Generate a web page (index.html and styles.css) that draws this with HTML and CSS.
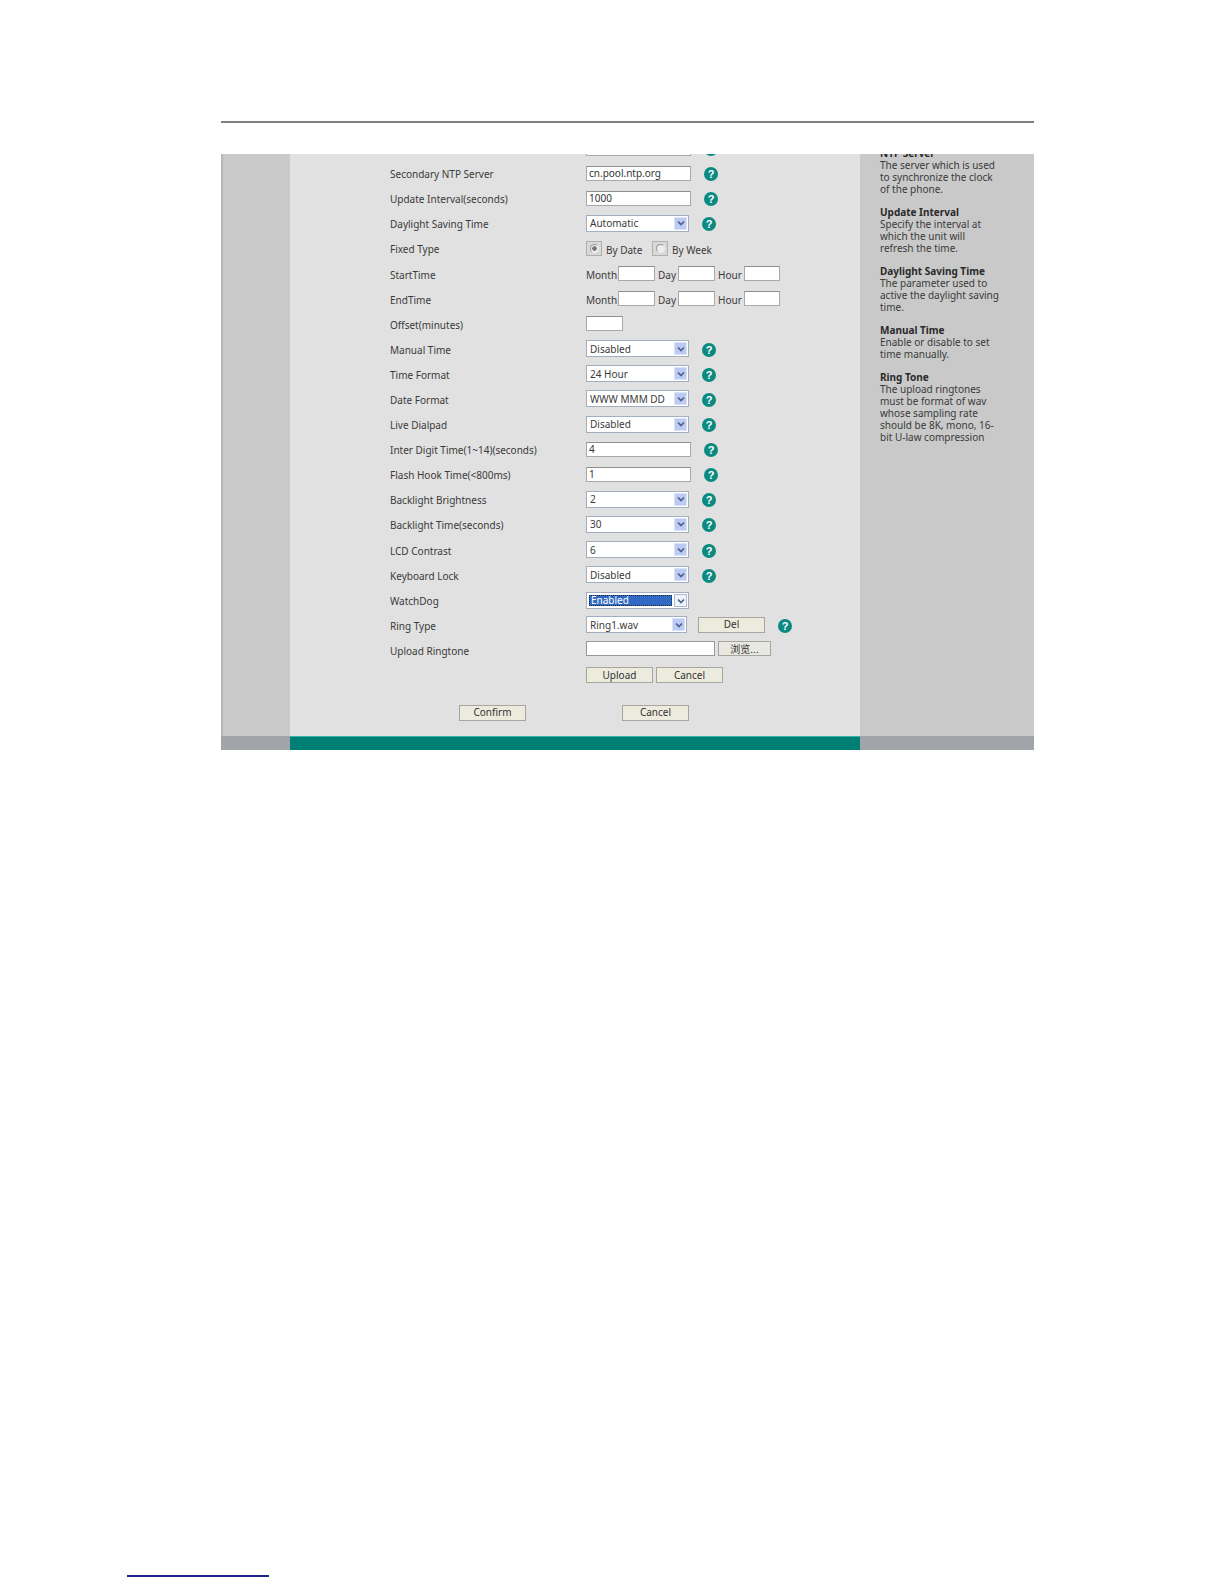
FILE: index.html
```html
<!DOCTYPE html>
<html lang="en">
<head>
<meta charset="utf-8">
<title>Phone preferences</title>
<link rel="stylesheet" href="styles.css">
</head>
<body>
<div class="rule"></div>
<div class="shot">
  <div class="shot-main">
    <div class="side-left"></div>
    <div class="center">
      <div class="form">
        <div class="row"><span class="label"></span><input class="txt" value=""><span class="help"></span></div>
        <div class="row"><span class="label">Secondary NTP Server</span><input class="txt" value="cn.pool.ntp.org"><span class="help">?</span></div>
        <div class="row"><span class="label">Update Interval(seconds)</span><input class="txt" value="1000"><span class="help">?</span></div>
        <div class="row"><span class="label">Daylight Saving Time</span><span class="sel"><span class="sel-text">Automatic</span><span class="arrow"><svg viewBox="0 0 10 10"><path d="M2 3.5 L5 6.5 L8 3.5" /></svg></span></span><span class="help help-sel">?</span></div>
        <div class="row"><span class="label">Fixed Type</span><span class="radio on"><i></i></span><span class="radio-label first">By Date</span><span class="radio"><i></i></span><span class="radio-label">By Week</span></div>
        <div class="row"><span class="label">StartTime</span><span class="unit">Month</span><input class="txt short"><span class="unit u2">Day</span><input class="txt short"><span class="unit u3">Hour</span><input class="txt short last"></div>
        <div class="row"><span class="label">EndTime</span><span class="unit">Month</span><input class="txt short"><span class="unit u2">Day</span><input class="txt short"><span class="unit u3">Hour</span><input class="txt short last"></div>
        <div class="row"><span class="label">Offset(minutes)</span><input class="txt short"></div>
        <div class="row"><span class="label">Manual Time</span><span class="sel"><span class="sel-text">Disabled</span><span class="arrow"><svg viewBox="0 0 10 10"><path d="M2 3.5 L5 6.5 L8 3.5" /></svg></span></span><span class="help help-sel">?</span></div>
        <div class="row"><span class="label">Time Format</span><span class="sel"><span class="sel-text">24 Hour</span><span class="arrow"><svg viewBox="0 0 10 10"><path d="M2 3.5 L5 6.5 L8 3.5" /></svg></span></span><span class="help help-sel">?</span></div>
        <div class="row"><span class="label">Date Format</span><span class="sel"><span class="sel-text">WWW MMM DD</span><span class="arrow"><svg viewBox="0 0 10 10"><path d="M2 3.5 L5 6.5 L8 3.5" /></svg></span></span><span class="help help-sel">?</span></div>
        <div class="row"><span class="label">Live Dialpad</span><span class="sel"><span class="sel-text">Disabled</span><span class="arrow"><svg viewBox="0 0 10 10"><path d="M2 3.5 L5 6.5 L8 3.5" /></svg></span></span><span class="help help-sel">?</span></div>
        <div class="row"><span class="label">Inter Digit Time(1~14)(seconds)</span><input class="txt" value="4"><span class="help">?</span></div>
        <div class="row"><span class="label">Flash Hook Time(&lt;800ms)</span><input class="txt" value="1"><span class="help">?</span></div>
        <div class="row"><span class="label">Backlight Brightness</span><span class="sel"><span class="sel-text">2</span><span class="arrow"><svg viewBox="0 0 10 10"><path d="M2 3.5 L5 6.5 L8 3.5" /></svg></span></span><span class="help help-sel">?</span></div>
        <div class="row"><span class="label">Backlight Time(seconds)</span><span class="sel"><span class="sel-text">30</span><span class="arrow"><svg viewBox="0 0 10 10"><path d="M2 3.5 L5 6.5 L8 3.5" /></svg></span></span><span class="help help-sel">?</span></div>
        <div class="row"><span class="label">LCD Contrast</span><span class="sel"><span class="sel-text">6</span><span class="arrow"><svg viewBox="0 0 10 10"><path d="M2 3.5 L5 6.5 L8 3.5" /></svg></span></span><span class="help help-sel">?</span></div>
        <div class="row"><span class="label">Keyboard Lock</span><span class="sel"><span class="sel-text">Disabled</span><span class="arrow"><svg viewBox="0 0 10 10"><path d="M2 3.5 L5 6.5 L8 3.5" /></svg></span></span><span class="help help-sel">?</span></div>
        <div class="row"><span class="label">WatchDog</span><span class="sel focused"><span class="sel-text">Enabled</span><span class="arrow"><svg viewBox="0 0 10 10"><path d="M2 3.5 L5 6.5 L8 3.5" /></svg></span></span></div>
        <div class="row"><span class="label">Ring Type</span><span class="sel ring"><span class="sel-text">Ring1.wav</span><span class="arrow"><svg viewBox="0 0 10 10"><path d="M2 3.5 L5 6.5 L8 3.5" /></svg></span></span><button class="btn del">Del</button><span class="help help-ring">?</span></div>
        <div class="row row-file"><span class="label">Upload Ringtone</span><span class="file-field"></span><button class="btn browse">浏览...</button></div>
        <div class="row row-upload"><span class="label"></span><button class="btn">Upload</button><button class="btn cancel2">Cancel</button></div>
        <div class="actions"><button class="btn">Confirm</button><button class="btn">Cancel</button></div>
      </div>
    </div>
    <div class="side-right">
      <div class="notes">
        <p><b>NTP Server</b>The server which is used<br>to synchronize the clock<br>of the phone.</p>
        <p><b>Update Interval</b>Specify the interval at<br>which the unit will<br>refresh the time.</p>
        <p><b>Daylight Saving Time</b>The parameter used to<br>active the daylight saving<br>time.</p>
        <p><b>Manual Time</b>Enable or disable to set<br>time manually.</p>
        <p><b>Ring Tone</b>The upload ringtones<br>must be format of wav<br>whose sampling rate<br>should be 8K, mono, 16-<br>bit U-law compression</p>
      </div>
    </div>
  </div>
  <div class="shot-foot"><div class="foot-side"></div><div class="foot-mid"></div><div class="foot-side foot-right"></div></div>
</div>
<div class="footnote"></div>
</body>
</html>
```
FILE: styles.css
```css
* { box-sizing: border-box; }
html, body { margin: 0; padding: 0; background: #fff; }
body { height: 1584px; overflow: hidden; font-family: "Noto Sans", "Liberation Sans", sans-serif; font-size: 10px; color: #3a3a3a; }

.rule { height: 2px; margin: 121px 0 0 221px; width: 813px; background: #808080; }

.shot { width: 813px; height: 596px; margin: 31px 0 0 221px; display: flex; flex-direction: column; overflow: hidden; }
.shot-main { flex: 1; display: flex; min-height: 0; }
.side-left { width: 69px; background: #c9c9c9; border-left: 2px solid #b8b8b8; }
.center { width: 570px; background: #e1e1e1; overflow: hidden; }
.side-right { flex: 1; background: #c9c9c9; overflow: hidden; }

.form { margin-top: -18.5px; padding-left: 100px; }
.row { display: flex; align-items: center; height: 25.1px; }
.label { width: 196px; flex: none; white-space: nowrap; padding-top: 2px; }

.txt { width: 105px; height: 15px; padding: 0 2px; margin: 0; border: 1px solid #a9a9a9; border-top-color: #8f8f8f; background: #fff; font: inherit; color: #333; border-radius: 0; outline: none; }
.txt.short { width: 37px; }
.txt.last { width: 36px; }

.help { width: 14px; height: 14px; margin: 2px 0 0 13px; border-radius: 50%; background: #0a8a80; color: #fff; font: bold 11px/14px "Liberation Sans", sans-serif; text-align: center; flex: none; }

.sel { width: 103px; height: 17px; display: flex; align-items: center; justify-content: space-between; padding: 1px 1px 1px 3px; background: #fff; border: 1px solid #a3afc0; flex: none; }
.sel-text { white-space: nowrap; }
.arrow { width: 13px; height: 13px; background: #bccbf3; border: 1px solid #dbe3f8; display: flex; align-items: center; justify-content: center; }
.arrow svg { width: 10px; height: 10px; }
.arrow path { fill: none; stroke: #4d6185; stroke-width: 1.7; }
.sel.ring { width: 101px; }
.sel.focused { margin-top: 2px; }
.sel.focused .sel-text { flex: 1; background: #316ac5; color: #fff; outline: 1px dotted #222; outline-offset: -1px; padding-left: 2px; margin-right: 2px; height: 11px; line-height: 11px; margin-left: -1px; }
.sel.focused .arrow { background: #eef2fb; border-color: #aebbd4; }

.radio { width: 16px; height: 15px; border: 1px solid #b0b0b0; background: #d8d8d8; display: flex; align-items: center; justify-content: center; flex: none; margin-top: 1px; }
.radio i { display: block; width: 9px; height: 9px; border-radius: 50%; background: #ececec; border: 1px solid #9a9a9a; border-right-color: #eee; border-bottom-color: #eee; }
.radio.on i { background: radial-gradient(circle, #777 0 2px, #ececec 2.5px); }
.radio-label { margin-left: 4px; margin-top: 3px; white-space: nowrap; }
.radio-label.first { width: 46px; flex: none; }

.unit { width: 32px; flex: none; padding-top: 2px; }
.unit.u2 { width: 20px; margin-left: 3px; }
.unit.u3 { width: 26px; margin-left: 3px; }

.btn { width: 67px; height: 16px; padding: 0; margin: 0; background: #ecebdd; border: 1px solid #a6a79c; font: inherit; color: #333; line-height: 13px; flex: none; border-radius: 0; }
.btn.del { margin-left: 11px; }
.btn.cancel2 { margin-left: 3px; }
.btn.browse { width: 53px; height: 15px; margin-left: 3px; background: #e8e8e0; font-family: "Noto Sans CJK SC", "Noto Sans", sans-serif; }
.file-field { width: 129px; height: 15px; background: #fff; border: 1px solid #999; flex: none; }
.row-file { position: relative; top: -1px; }
.row-file .label { padding-top: 5px; }
.row-upload .label { padding: 0; }

.actions { display: flex; margin-top: 17px; padding-left: 69px; gap: 96px; }

.notes { padding: 0 0 0 20px; margin-top: -7px; font-size: 10px; line-height: 12px; white-space: nowrap; }
.notes p { margin: 0 0 11px; }
.notes b { display: block; font-weight: 700; color: #2a2a2a; }

.shot-foot { height: 14px; display: flex; }
.foot-side { width: 69px; background: #a1a5aa; }
.foot-mid { width: 570px; background: #007f74; border-top: 1px solid #39b0ae; }
.foot-right { flex: 1; }

.footnote { width: 142px; height: 2px; margin: 825px 0 0 127px; background: #20208f; }
```
